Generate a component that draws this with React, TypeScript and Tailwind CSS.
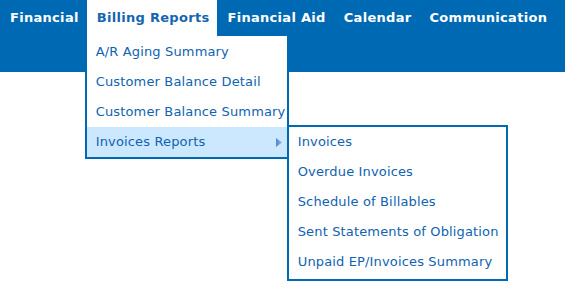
import { useState } from "react";

const navItems = [
  "Financial",
  "Billing Reports",
  "Financial Aid",
  "Calendar",
  "Communication",
];

const billingItems = [
  "A/R Aging Summary",
  "Customer Balance Detail",
  "Customer Balance Summary",
  "Invoices Reports",
];

const invoiceItems = [
  "Invoices",
  "Overdue Invoices",
  "Schedule of Billables",
  "Sent Statements of Obligation",
  "Unpaid EP/Invoices Summary",
];

function SubArrow() {
  return (
    <svg width="6" height="9" viewBox="0 0 6 9" className="absolute right-[5px] top-[11px]">
      <defs>
        <linearGradient id="arr" x1="0" y1="0" x2="1" y2="0">
          <stop offset="0" stopColor="#4f86cf" />
          <stop offset="1" stopColor="#8fb4e6" />
        </linearGradient>
      </defs>
      <path d="M0 0 L6 4.5 L0 9 Z" fill="url(#arr)" />
    </svg>
  );
}

export default function App() {
  const [open] = useState("Billing Reports");

  return (
    <div
      className="h-[289px] w-[565px] bg-white text-[13px]"
      style={{ fontFamily: '"DejaVu Sans", Verdana, sans-serif' }}
    >
      <nav className="flex h-[72px] items-start bg-[#0069b3]">
        {navItems.map((item) => {
          const active = item === open;
          return (
            <div key={item} className="relative">
              <div
                className={`flex h-[36px] items-center whitespace-nowrap pl-[10px] pr-[8px] font-bold tracking-[0.3px] ${
                  active ? "bg-white text-[#1466b0]" : "text-white"
                }`}
              >
                {item}
              </div>

              {active && (
                <div className="absolute left-[-2px] top-[36px] z-10 w-[204px] border-x-2 border-b-2 border-[#0069b3] bg-white pt-px">
                  {billingItems.map((sub) => {
                    const hl = sub === "Invoices Reports";
                    return (
                      <div
                        key={sub}
                        className={`relative flex h-[30px] items-center whitespace-nowrap px-[9px] tracking-[0.15px] text-[#0f63b0] ${
                          hl ? "bg-[#cce8ff]" : ""
                        }`}
                      >
                        {sub}
                        {hl && (
                          <>
                            <SubArrow />
                            <div className="absolute left-full top-[-2px] w-[221px] border-2 border-[#0069b3] bg-white pb-[2px]">
                              {invoiceItems.map((inv) => (
                                <div
                                  key={inv}
                                  className="flex h-[30px] items-center whitespace-nowrap px-[9px] text-[#0f63b0]"
                                >
                                  {inv}
                                </div>
                              ))}
                            </div>
                          </>
                        )}
                      </div>
                    );
                  })}
                </div>
              )}
            </div>
          );
        })}
      </nav>
    </div>
  );
}
